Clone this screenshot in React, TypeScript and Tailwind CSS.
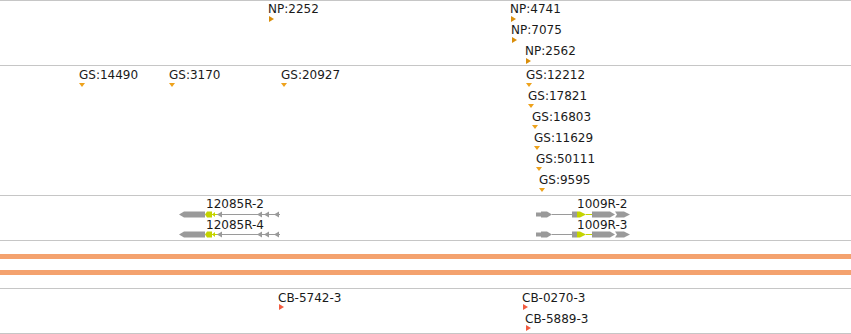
const LINE = "border-[#c6c6c6]";

type Mark = { label: string; x: number; row: number };

const npMarks: Mark[] = [
  { label: "NP:2252", x: 269, row: 0 },
  { label: "NP:4741", x: 511, row: 0 },
  { label: "NP:7075", x: 512, row: 1 },
  { label: "NP:2562", x: 526, row: 2 },
];

const gsMarks: Mark[] = [
  { label: "GS:14490", x: 79, row: 0 },
  { label: "GS:3170", x: 169, row: 0 },
  { label: "GS:20927", x: 281, row: 0 },
  { label: "GS:12212", x: 526, row: 0 },
  { label: "GS:17821", x: 528, row: 1 },
  { label: "GS:16803", x: 532, row: 2 },
  { label: "GS:11629", x: 534, row: 3 },
  { label: "GS:50111", x: 536, row: 4 },
  { label: "GS:9595", x: 539, row: 5 },
];

const cbMarks: Mark[] = [
  { label: "CB-5742-3", x: 279, row: 0 },
  { label: "CB-0270-3", x: 523, row: 0 },
  { label: "CB-5889-3", x: 526, row: 1 },
];

function RightTri({ color }: { color: string }) {
  return (
    <svg width="5" height="6" viewBox="0 0 5 6" className="block">
      <polygon points="0,0 5,3 0,6" fill={color} />
    </svg>
  );
}

function DownTri({ color }: { color: string }) {
  return (
    <svg width="6" height="4" viewBox="0 0 6 4" className="block">
      <polygon points="0,0 6,0 3,4" fill={color} />
    </svg>
  );
}

function Feature({
  mark,
  top,
  gap,
  textShift,
  children,
}: {
  mark: Mark;
  top: number;
  gap: string;
  textShift: string;
  children: React.ReactNode;
}) {
  return (
    <div
      className={`absolute flex flex-col ${gap}`}
      style={{ left: mark.x, top: top + mark.row * 21 }}
    >
      <span className={`text-[12px] leading-[12px] text-[#1a1a1a] whitespace-nowrap ${textShift}`}>
        {mark.label}
      </span>
      {children}
    </div>
  );
}

const GREY = "#9a9a9a";
const LIME = "#c4d400";

function ReverseGene({ cy }: { cy: number }) {
  const heads = [217, 257, 264, 274];
  return (
    <g>
      <rect x={217} y={cy - 0.5} width={63} height={1} fill={GREY} />
      <polygon
        points={`179,${cy} 184,${cy - 3} 205,${cy - 3} 205,${cy + 3} 184,${cy + 3}`}
        fill={GREY}
      />
      <polygon
        points={`205,${cy} 207,${cy - 3} 212,${cy - 3} 212,${cy + 3} 207,${cy + 3}`}
        fill={LIME}
      />
      <rect x={212} y={cy - 0.5} width={5} height={1} fill={LIME} />
      <polygon points={`212,${cy} 215,${cy - 2.5} 215,${cy + 2.5}`} fill={LIME} />
      {heads.map((h) => (
        <polygon
          key={h}
          points={`${h},${cy} ${h + 5},${cy - 3} ${h + 5},${cy + 3}`}
          fill={GREY}
        />
      ))}
    </g>
  );
}

function ForwardGene({ cy }: { cy: number }) {
  return (
    <g>
      <rect x={536} y={cy - 2} width={5} height={4} fill={GREY} />
      <polygon
        points={`541,${cy - 3} 547,${cy - 3} 552,${cy} 547,${cy + 3} 541,${cy + 3}`}
        fill={GREY}
      />
      <rect x={552} y={cy - 0.5} width={20} height={1} fill={GREY} />
      <rect x={572} y={cy - 3} width={5} height={6} fill={GREY} />
      <polygon
        points={`577,${cy - 3} 580,${cy - 3} 586,${cy} 580,${cy + 3} 577,${cy + 3}`}
        fill={LIME}
      />
      <rect x={586} y={cy - 0.5} width={6} height={1} fill={LIME} />
      <polygon
        points={`592,${cy - 3} 610,${cy - 3} 615,${cy} 610,${cy + 3} 592,${cy + 3}`}
        fill={GREY}
      />
      <polygon
        points={`615,${cy - 3} 624,${cy - 3} 630,${cy} 624,${cy + 3} 615,${cy + 3} 617,${cy}`}
        fill={GREY}
      />
    </g>
  );
}

export default function App() {
  return (
    <div
      className="w-[851px] h-[334px] bg-white flex flex-col overflow-hidden"
      style={{ fontFamily: '"DejaVu Sans", sans-serif' }}
    >
      {/* NP track */}
      <div className={`relative h-[65px] border-t ${LINE}`}>
        {npMarks.map((m) => (
          <Feature key={m.label} mark={m} top={2} gap="gap-px" textShift="-ml-px">
            <RightTri color="#d98e0b" />
          </Feature>
        ))}
      </div>

      {/* GS track */}
      <div className={`relative h-[130px] border-t ${LINE}`}>
        {gsMarks.map((m) => (
          <Feature key={m.label} mark={m} top={3} gap="gap-[2px]" textShift="">
            <DownTri color="#eea21c" />
          </Feature>
        ))}
      </div>

      {/* gene models */}
      <div className={`relative h-[45px] border-t ${LINE}`}>
        <svg width="851" height="44" className="absolute left-0 top-0">
          <ReverseGene cy={18.5} />
          <ReverseGene cy={38.5} />
          <ForwardGene cy={18.5} />
          <ForwardGene cy={38.5} />
        </svg>
        <span className="absolute left-[206px] top-[2px] text-[12px] leading-[12px] text-[#1a1a1a]">
          12085R-2
        </span>
        <span className="absolute left-[206px] top-[23px] text-[12px] leading-[12px] text-[#1a1a1a]">
          12085R-4
        </span>
        <span className="absolute left-[577px] top-[2px] text-[12px] leading-[12px] text-[#1a1a1a]">
          1009R-2
        </span>
        <span className="absolute left-[577px] top-[23px] text-[12px] leading-[12px] text-[#1a1a1a]">
          1009R-3
        </span>
      </div>

      {/* coverage bars */}
      <div className={`h-[48px] border-t ${LINE} flex flex-col gap-[11px] pt-[13px]`}>
        <div className="h-[5px] bg-[#f4a26f]" />
        <div className="h-[5px] bg-[#f4a26f]" />
      </div>

      {/* CB track */}
      <div className={`relative h-[46px] border-y ${LINE}`}>
        {cbMarks.map((m) => (
          <Feature key={m.label} mark={m} top={3} gap="gap-0" textShift="-ml-px">
            <RightTri color="#f25c40" />
          </Feature>
        ))}
      </div>
    </div>
  );
}
